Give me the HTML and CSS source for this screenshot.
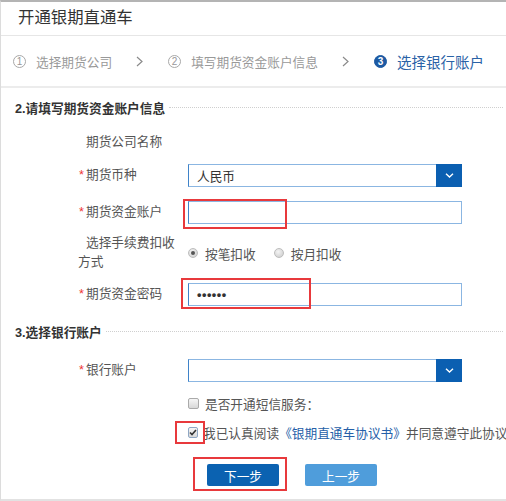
FILE: index.html
```html
<!DOCTYPE html>
<html lang="zh-CN">
<head>
    <meta charset="UTF-8">
    <title>开通银期直通车</title>
    <link rel="stylesheet" href="styles.css">
</head>
<body>
<div class="page">
    <div class="title">开通银期直通车</div>

    <!-- 步骤条 -->
    <div class="steps">
        <div class="step"><span class="num">1</span>选择期货公司</div>
        <svg class="arrow" width="7" height="11" viewBox="0 0 7 11"><path d="M1 1 L6 5.5 L1 10" fill="none" stroke="#8a8a8a" stroke-width="1.2"/></svg>
        <div class="step"><span class="num">2</span>填写期货资金账户信息</div>
        <svg class="arrow" width="7" height="11" viewBox="0 0 7 11"><path d="M1 1 L6 5.5 L1 10" fill="none" stroke="#8a8a8a" stroke-width="1.2"/></svg>
        <div class="step active"><span class="num">3</span>选择银行账户</div>
    </div>

    <!-- 期货资金账户信息 -->
    <div class="section-title first"><span>2.请填写期货资金账户信息</span></div>
    <div class="form">
        <div class="row r-company">
            <div class="label"><i class="star"></i>期货公司名称</div>
        </div>
        <div class="row r-currency">
            <div class="label"><i class="star">*</i>期货币种</div>
            <div class="field select">
                <div class="select-val">人民币</div>
                <div class="select-btn"><svg width="9" height="5" viewBox="0 0 9 5"><path d="M1 0.8 L4.5 4 L8 0.8" fill="none" stroke="#fff" stroke-width="1.4"/></svg></div>
            </div>
        </div>
        <div class="row r-account">
            <div class="label"><i class="star">*</i>期货资金账户</div>
            <div class="field">
                <span class="mark mark-account"></span>
            </div>
        </div>
        <div class="row r-fee">
            <div class="label"><i class="star"></i>选择手续费扣收方式</div>
            <div class="radios">
                <span class="radio checked"></span><span class="radio-text">按笔扣收</span>
                <span class="radio"></span><span class="radio-text">按月扣收</span>
            </div>
        </div>
        <div class="row r-password">
            <div class="label"><i class="star">*</i>期货资金密码</div>
            <div class="field pwd">
                <span class="dots">••••••</span>
                <span class="mark mark-pwd"></span>
            </div>
        </div>
    </div>

    <!-- 银行账户 -->
    <div class="section-title second"><span>3.选择银行账户</span></div>
    <div class="form">
        <div class="row r-bank">
            <div class="label"><i class="star">*</i>银行账户</div>
            <div class="field select">
                <div class="select-val"></div>
                <div class="select-btn"><svg width="9" height="5" viewBox="0 0 9 5"><path d="M1 0.8 L4.5 4 L8 0.8" fill="none" stroke="#fff" stroke-width="1.4"/></svg></div>
            </div>
        </div>
        <div class="row plain r-sms">
            <span class="check"></span>是否开通短信服务：
        </div>
        <div class="row plain r-agree">
            <span class="check checked">
                <svg width="8" height="7" viewBox="0 0 8 7"><path d="M1 3.5 L3 5.5 L7 1" fill="none" stroke="#333" stroke-width="1.6"/></svg>
                <span class="mark mark-check"></span>
            </span>我已认真阅读<a href="javascript:void(0);">《银期直通车协议书》</a>并同意遵守此协议
        </div>
        <div class="buttons">
            <button class="btn btn-next">下一步<span class="mark mark-btn"></span></button>
            <button class="btn btn-prev">上一步</button>
        </div>
    </div>
</div>
</body>
</html>
```

FILE: styles.css
```css
body {
    margin: 0;
    padding: 0;
    background-color: #fff;
    font-family: "Liberation Sans", "Noto Sans CJK SC", sans-serif;
    color: #555;
    font-size: 12.7px;
}
.page {
    height: 501px;
    box-sizing: border-box;
    border-top: 2px solid #b4b4b4;
    border-left: 1px solid #dcdcdc;
    border-bottom: 2px solid #e2e2e2;
    overflow: hidden;
}
.title {
    height: 33px;
    line-height: 31px;
    padding-left: 17px;
    font-size: 16.4px;
    color: #333;
    border-bottom: 1px solid #e6e6e6;
}
.steps {
    height: 50px;
    display: flex;
    align-items: center;
    padding-left: 12px;
    border-bottom: 2px solid #ececec;
    color: #999;
}
.step {
    display: flex;
    align-items: center;
}
.num {
    width: 11px;
    height: 11px;
    border: 1px solid #a8a8a8;
    border-radius: 50%;
    font-size: 10px;
    line-height: 11px;
    text-align: center;
    margin-right: 10px;
    color: #999;
}
.arrow {
    margin: 0 25px 0 24px;
}
.step.active {
    color: #2a62a6;
    font-size: 14.5px;
}
.step.active .num {
    background-color: #1d5aa3;
    border-color: #1d5aa3;
    color: #fff;
    font-weight: bold;
}
.section-title {
    display: flex;
    align-items: center;
    height: 18px;
    padding-left: 14px;
    font-weight: bold;
    color: #333;
}
.section-title::after {
    content: "";
    flex: 1;
    border-bottom: 1px dotted #cfcfcf;
    margin: 0 3px 0 4px;
}
.section-title.first {
    margin-top: 10px;
}
.section-title.second {
    margin-top: 16px;
}
.form {
    padding-left: 77px;
}
.row {
    display: flex;
    align-items: center;
}
.label {
    width: 102px;
    margin-right: 8px;
    line-height: 19px;
}
.star {
    display: inline-block;
    width: 8px;
    font-style: normal;
    color: #e33;
    padding-left: 1px;
    box-sizing: border-box;
}
.field {
    position: relative;
    width: 274px;
    height: 23px;
    box-sizing: border-box;
    border: 1px solid #8bb6e2;
    border-left-color: #3f83c9;
    display: flex;
    align-items: center;
}
.select-val {
    flex: 1;
    padding-left: 8px;
    color: #333;
}
.select-btn {
    width: 26px;
    height: 23px;
    margin: -1px -1px -1px 0;
    background-color: #0b5fb1;
    display: flex;
    align-items: center;
    justify-content: center;
}
.dots {
    padding-left: 8px;
    color: #333;
    font-weight: bold;
    letter-spacing: 0.5px;
}
.mark {
    position: absolute;
    border: 2px solid #e8393c;
    box-sizing: border-box;
}
.mark-account {
    left: -6px;
    top: -3px;
    width: 104px;
    height: 30px;
}
.mark-pwd {
    left: -8px;
    top: -6px;
    width: 130px;
    height: 31px;
}
.r-company {
    margin-top: 17px;
    height: 18px;
}
.r-currency {
    margin-top: 13px;
}
.r-account {
    margin-top: 14px;
}
.r-fee {
    margin-top: 10px;
}
.r-password {
    margin-top: 11px;
}
.radios {
    display: flex;
    align-items: center;
}
.radio {
    width: 10px;
    height: 10px;
    border-radius: 50%;
    background: radial-gradient(circle at 40% 35%, #f4f4f4, #c9c9c9);
    border: 1px solid #bdbdbd;
    box-sizing: border-box;
    margin-right: 7px;
    position: relative;
}
.radio.checked::after {
    content: "";
    position: absolute;
    left: 2px;
    top: 2px;
    width: 4px;
    height: 4px;
    border-radius: 50%;
    background-color: #555;
}
.radio-text {
    margin-right: 18px;
}
.r-bank {
    margin-top: 19px;
}
.plain {
    padding-left: 110px;
    height: 16px;
    white-space: nowrap;
}
.r-sms {
    margin-top: 13px;
}
.r-agree {
    margin-top: 13px;
}
.check {
    position: relative;
    width: 11px;
    height: 11px;
    box-sizing: border-box;
    border: 1px solid #aaa;
    border-radius: 2px;
    background: linear-gradient(#f6f6f6, #d8d8d8);
    margin-right: 6px;
    display: flex;
    align-items: center;
    justify-content: center;
}
.check.checked {
    margin-right: 5px;
    border-color: #8fa7c4;
}
.mark-check {
    left: -14px;
    top: -7px;
    width: 30px;
    height: 23px;
}
a {
    color: #2560a8;
    text-decoration: none;
}
.buttons {
    display: flex;
    padding-left: 129px;
    margin-top: 24px;
}
.btn {
    position: relative;
    width: 72px;
    height: 22px;
    border: none;
    border-radius: 2px;
    color: #fff;
    font-family: "Liberation Sans", "Noto Sans CJK SC", sans-serif;
    font-size: 12.7px;
    padding: 0;
    cursor: pointer;
}
.btn-next {
    background-color: #0b62b1;
    margin-right: 26px;
}
.btn-prev {
    background-color: #4f9ddb;
}
.mark-btn {
    left: -14px;
    top: -7px;
    width: 94px;
    height: 34px;
}
```
